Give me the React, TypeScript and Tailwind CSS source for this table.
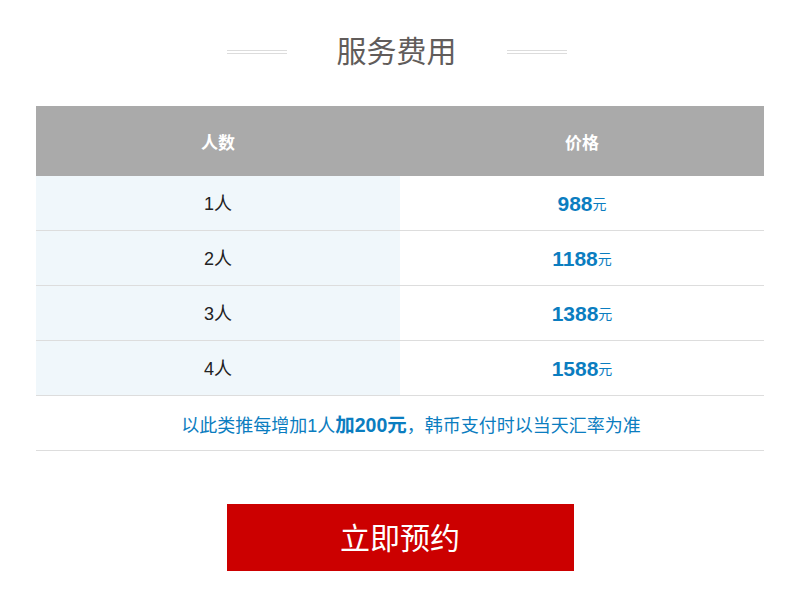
const rows = [
  { people: "1人", price: "988" },
  { people: "2人", price: "1188" },
  { people: "3人", price: "1388" },
  { people: "4人", price: "1588" },
];

const FONT = "font-['Liberation_Sans','Noto_Sans_CJK_SC',sans-serif]";

function TitleLine() {
  return (
    <div className="flex w-[60px] flex-col gap-[2px]">
      <div className="h-px bg-[#dcdcdc]" />
      <div className="h-px bg-[#dcdcdc]" />
    </div>
  );
}

export default function App() {
  return (
    <div className={`${FONT} min-h-[607px] w-[800px] bg-white`}>
      {/* Title */}
      <div className="flex h-[106px] items-start justify-center pr-[7px] pt-[32px]">
        <div className="flex items-center gap-[50px]">
          <TitleLine />
          <h2 className="text-[30px] leading-[40px] text-[#615c5a]">服务费用</h2>
          <TitleLine />
        </div>
      </div>

      {/* Price table */}
      <div className="mx-[36px]">
        <div className="grid h-[70px] grid-cols-2 bg-[#aaaaaa] pt-[5px] text-[17px] font-bold text-white">
          <div className="flex items-center justify-center">人数</div>
          <div className="flex items-center justify-center">价格</div>
        </div>
        {rows.map((r) => (
          <div key={r.people} className="grid h-[55px] grid-cols-2 border-b border-[#dddddd]">
            <div className="flex items-center justify-center bg-[#f0f7fb] pt-[3px] text-[18px] text-[#222]">
              {r.people}
            </div>
            <div className="flex items-center justify-center pt-[1px] text-[#0b7dc0]">
              <span className="text-[21px] font-bold">{r.price}</span>
              <span className="mt-[2px] text-[14px]">元</span>
            </div>
          </div>
        ))}
        <div className="flex h-[55px] items-center justify-center border-b border-[#dddddd] pl-[22px] pt-[6px] text-[#0b7dc0]">
          <p className="text-[18px]">
            以此类推每增加1人<span className="text-[19.5px] font-bold">加200元</span>，韩币支付时以当天汇率为准
          </p>
        </div>
      </div>

      {/* Booking button */}
      <div className="flex justify-center pt-[53px]">
        <button className="h-[67px] w-[347px] bg-[#cc0000] pt-[2px] text-[30px] text-white">立即预约</button>
      </div>
    </div>
  );
}
